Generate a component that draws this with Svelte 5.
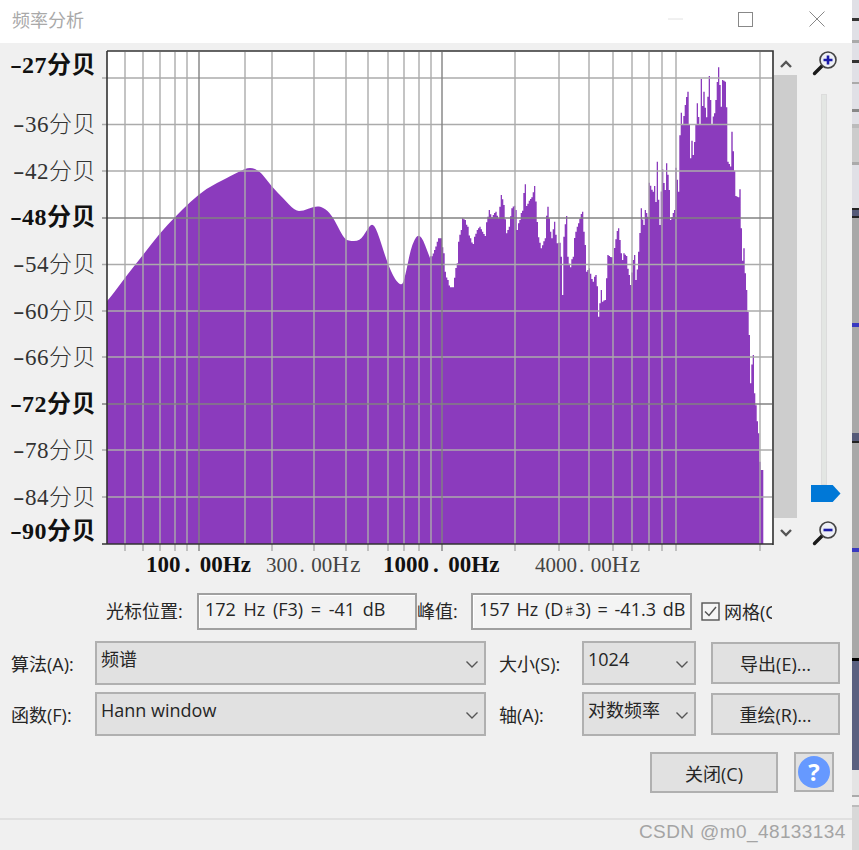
<script lang="ts">
  const gridH = [78, 124.5, 171, 264.5, 311, 357, 450, 497];
  const gridHDark = [218, 404];
  const gridV = [125, 143, 160, 175, 187, 245, 272, 314, 346, 368, 388, 404, 419, 431, 515, 559, 589, 613, 632, 649, 662, 676, 760];
  const gridVDark = [199, 442];
  const noTick = [245, 431];

  const yLabels = [
    ["27分贝", 65, true],
    ["36分贝", 124, false],
    ["42分贝", 171, false],
    ["48分贝", 217, true],
    ["54分贝", 264, false],
    ["60分贝", 311, false],
    ["66分贝", 357, false],
    ["72分贝", 404, true],
    ["78分贝", 450, false],
    ["84分贝", 497, false],
    ["90分贝", 531, true]
  ];

  const xLabels = [
    ["100", 146, true],
    ["300", 266, false],
    ["1000", 383, true],
    ["4000", 535, false]
  ];

  // smooth low end of the spectrum, page coordinates
  const low = [
    [107, 301], [110, 298], [127, 275], [143, 255], [160, 233], [175, 217], [190, 202], [207, 188],
    [227, 178], [240, 171], [250, 167], [260, 171], [272, 187], [283, 198], [295, 211], [303, 211],
    [315, 206], [323, 207], [332, 215], [343, 237], [348, 241], [360, 241], [367, 230], [372, 223],
    [377, 230], [387, 262], [395, 280], [402, 286], [405, 277], [412, 243], [420, 232], [430, 258]
  ];

  // spiky high end, measured at 3x from x=430
  const high = [
    [3, 775], [15, 750], [25, 715], [35, 715], [40, 760], [45, 815], [52, 840], [60, 862], [70, 862], [80, 790], [87, 725],
    [92, 690], [98, 655], [105, 660], [112, 680], [120, 715], [128, 732], [135, 710], [142, 690], [150, 680],
    [158, 695], [165, 708], [172, 650], [178, 630], [185, 652], [197, 635], [205, 655], [215, 585], [222, 615],
    [230, 700], [238, 680], [245, 625], [252, 617], [258, 630], [262, 690], [268, 660], [276, 632], [285, 553],
    [291, 618], [298, 602], [306, 592], [315, 558], [325, 712], [335, 745], [345, 715], [352, 620], [358, 655],
    [364, 715], [375, 665], [380, 730], [388, 728], [394, 770], [399, 885], [403, 710], [408, 648], [414, 770],
    [420, 802], [428, 770], [436, 695], [446, 670], [456, 635], [466, 735], [470, 815], [478, 805], [488, 845],
    [496, 825], [504, 870], [506, 950], [514, 870], [518, 905], [524, 900], [530, 835], [534, 765], [544, 772],
    [550, 795], [556, 718], [564, 685], [570, 720], [576, 780], [582, 760], [590, 768], [596, 825], [603, 855],
    [609, 780], [614, 765], [619, 840], [627, 755], [634, 625], [640, 675], [647, 630], [654, 650], [659, 548],
    [668, 575], [674, 558], [680, 630], [683, 485], [688, 675], [698, 508], [704, 570], [711, 490], [718, 570],
    [723, 660], [733, 630], [739, 503], [745, 575], [752, 338], [758, 375], [767, 315], [772, 275], [776, 375],
    [782, 475], [786, 422], [791, 465], [798, 375], [802, 310], [808, 372], [812, 237], [817, 318], [821, 275],
    [829, 352], [839, 228], [845, 372], [852, 340], [857, 300], [866, 202], [870, 255], [875, 320], [879, 240],
    [886, 245], [891, 322], [894, 485], [905, 505], [907, 395], [913, 512], [917, 588], [925, 592], [928, 568],
    [934, 685], [939, 782], [943, 745], [948, 870], [952, 935], [957, 1005], [962, 1150], [968, 1065], [975, 1180],
    [985, 1300], [989, 1385], [994, 1410], [1000, 1410]
  ];

  const bottom = 544;

  // value of the outline at x, straight lines between measured points
  function lerp(points: number[][], x: number) {
    for (let i = 1; i < points.length; i++) {
      const [x0, y0] = points[i - 1];
      const [x1, y1] = points[i];
      if (x <= x1) return y0 + ((y1 - y0) * (x - x0)) / (x1 - x0);
    }
    return points[points.length - 1][1];
  }

  function spectrumPath() {
    let d = `M107 ${bottom} L107 301`;
    // low end: mid-point quadratics so the hump stays round
    for (let i = 1; i < low.length - 1; i++) {
      const [x, y] = low[i];
      const [nx, ny] = low[i + 1];
      d += ` Q${x} ${y} ${(x + nx) / 2} ${(y + ny) / 2}`;
    }
    d += " L430 258";

    // high end: one narrow bar per 4 units, a measured point inside a bar wins
    const barWidth = 4;
    let prev = 775;
    for (let x = 4; x < 1000; x += barWidth) {
      const inside = high.filter((p) => p[0] >= x && p[0] < x + barWidth);
      let y = lerp(high, x + barWidth / 2);
      if (inside.length) {
        y = inside.reduce((best, p) => (Math.abs(p[1] - prev) > Math.abs(best - prev) ? p[1] : best), inside[0][1]);
      }
      prev = y;
      d += ` V${(y / 3).toFixed(1)} H${(430 + (x + barWidth) / 3).toFixed(1)}`;
    }
    return d + ` V${bottom} Z`;
  }

  const spectrum = spectrumPath();
</script>

<div class="window">
  <div class="main">
    <header class="titlebar">
      <span class="title">频率分析</span>
      <div class="winbtns">
        <svg class="min" width="15" height="2" viewBox="0 0 15 2"><path d="M0 1H15" stroke="#e2e2e2" /></svg>
        <svg class="max" width="15" height="15" viewBox="0 0 15 15"><rect x="0.5" y="0.5" width="14" height="14" fill="none" stroke="#888" /></svg>
        <svg class="close" width="16" height="16" viewBox="0 0 16 16"><path d="M.5 .5L15.5 15.5M15.5 .5L.5 15.5" stroke="#888" fill="none" /></svg>
      </div>
    </header>

    <section class="dialog">
      <div class="chart">
        <div class="y-axis">
          {#each yLabels as [text, y, bold]}
            <span class="y-label" class:bold style="top: {(y as number) - 48}px"><i>-</i>{text}</span>
          {/each}
        </div>

        <div class="plot">
          <svg width="674" height="510" viewBox="100 48 674 510">
            <rect x="107" y="51" width="665" height="493" fill="#fff" />
            <path d={spectrum} fill="#8b3bbd" />
            {#each gridH as y}
              <path d="M102 {y}H772" stroke="#ababab" stroke-width="1.4" />
            {/each}
            {#each gridV as x}
              <path d="M{x} 52V{noTick.includes(x) ? 544 : 551}" stroke="#ababab" stroke-width="1.4" />
            {/each}
            {#each gridHDark as y}
              <path d="M102 {y}H772" stroke="#828282" stroke-width="1.4" />
            {/each}
            {#each gridVDark as x}
              <path d="M{x} 52V551" stroke="#828282" stroke-width="1.4" />
            {/each}
            <path d="M102 544H773M107 51H773V545M107 51V544" fill="none" stroke="#333" stroke-width="1.6" />
          </svg>
          {#each xLabels as [text, x, bold]}
            <span class="x-label" class:bold style="left: {(x as number) - 100}px">{text}<i>.</i>00<b>Hz</b></span>
          {/each}
        </div>

        <div class="scroll">
          <svg width="14" height="10" viewBox="0 0 14 10"><path d="M2 8L7 3L12 8" fill="none" stroke="#555" stroke-width="2.4" /></svg>
          <div class="thumb"></div>
          <svg width="14" height="10" viewBox="0 0 14 10"><path d="M2 2L7 7L12 2" fill="none" stroke="#555" stroke-width="2.4" /></svg>
        </div>

        <div class="zoom">
          <svg width="26" height="26" viewBox="0 0 26 26">
            <path d="M2.5 23.5L11 15" stroke="#1a1a1a" stroke-width="3.4" stroke-linecap="round" />
            <circle cx="16" cy="10" r="8" fill="#eef0f6" stroke="#444" stroke-width="1.6" />
            <path d="M16 5.5V14.5M11.5 10H20.5" stroke="#1c1ca8" stroke-width="2.6" />
          </svg>
          <div class="slider">
            <div class="slider-thumb"></div>
          </div>
          <svg width="26" height="26" viewBox="0 0 26 26">
            <path d="M2.5 23.5L11 15" stroke="#1a1a1a" stroke-width="3.4" stroke-linecap="round" />
            <circle cx="16" cy="10" r="8" fill="#eef0f6" stroke="#444" stroke-width="1.6" />
            <path d="M11.5 10H20.5" stroke="#1c1ca8" stroke-width="2.6" />
          </svg>
        </div>
      </div>

      <div class="readouts">
        <span class="read-label">光标位置:</span>
        <div class="readout first">172 Hz (F3) = -41 dB</div>
        <span class="read-label peak">峰值:</span>
        <div class="readout second">157 Hz (D<span class="sharp">♯</span>3) = -41.3 dB</div>
        <div class="check">
          <svg width="19" height="19" viewBox="0 0 19 19">
            <rect x="1" y="1" width="17" height="17" fill="#f6f6f6" stroke="#555" stroke-width="1.4" />
            <path d="M4 9.5L8 13.5L15 5" fill="none" stroke="#555" stroke-width="1.5" />
          </svg>
          <span class="check-text">网格(G)</span>
        </div>
      </div>

      <div class="controls">
        <span class="lab">算法(A):</span>
        <div class="select"><span>频谱</span>{@render chevron()}</div>
        <span class="lab second-lab">大小(S):</span>
        <div class="select"><span>1024</span>{@render chevron()}</div>
        <button type="button">导出(E)...</button>

        <span class="lab">函数(F):</span>
        <div class="select"><span>Hann window</span>{@render chevron()}</div>
        <span class="lab second-lab">轴(A):</span>
        <div class="select"><span>对数频率</span>{@render chevron()}</div>
        <button type="button">重绘(R)...</button>
      </div>

      <div class="actions">
        <button type="button" class="close-btn">关闭(C)</button>
        <button type="button" class="help"><span>?</span></button>
      </div>

      <div class="footer"></div>
    </section>
  </div>
  <div class="strip"></div>
  <span class="watermark">CSDN @m0_48133134</span>
</div>

{#snippet chevron()}
  <svg class="chev" width="14" height="9" viewBox="0 0 14 9"><path d="M1.5 1.5L7 7L12.5 1.5" fill="none" stroke="#555" stroke-width="1.4" /></svg>
{/snippet}

<style>
  :global(body) {
    margin: 0;
    background: #fff;
  }

  .window {
    position: relative;
    display: flex;
    width: 859px;
    height: 850px;
    overflow: hidden;
    font-family: "Open Sans", "Noto Sans CJK SC", sans-serif;
    color: #262626;
  }

  .main {
    display: flex;
    flex-direction: column;
    width: 852px;
  }

  .titlebar {
    display: flex;
    align-items: center;
    justify-content: space-between;
    height: 43px;
    background: #fff;
    padding-left: 12px;
    box-sizing: border-box;
  }

  .title {
    font-family: "Noto Sans CJK SC", sans-serif;
    font-size: 18px;
    color: #a9a9a9;
    margin-top: -5px;
  }

  .winbtns {
    position: relative;
    display: flex;
    align-items: center;
    margin-top: -5px;
    padding-right: 27px;
  }

  .winbtns .max {
    margin-left: 55px;
  }

  .winbtns .close {
    margin-left: 56px;
  }

  .dialog {
    flex: 1;
    background: #f0f0f0;
    display: flex;
    flex-direction: column;
  }

  .chart {
    display: flex;
    height: 540px;
    padding-top: 5px;
    box-sizing: border-box;
  }

  .y-axis {
    position: relative;
    width: 100px;
    flex: none;
  }

  .y-label {
    position: absolute;
    right: 4px;
    transform: translateY(-50%);
    white-space: nowrap;
    font-family: "Liberation Serif", "Noto Sans CJK SC", serif;
    font-size: 23px;
    font-weight: 300;
    line-height: 1;
    letter-spacing: 0.5px;
    color: #333;
  }

  .y-label i {
    display: inline-block;
    font-style: normal;
    margin-right: 4px;
    transform: scaleX(1.5);
    transform-origin: left center;
  }

  .y-label.bold {
    font-size: 24px;
    font-weight: 700;
    color: #111;
  }

  .plot {
    position: relative;
    width: 674px;
    flex: none;
  }

  .plot svg {
    display: block;
  }

  .x-label {
    position: absolute;
    top: 505px;
    white-space: nowrap;
    font-family: "Liberation Serif", serif;
    font-size: 21px;
    line-height: 24px;
    color: #444;
  }

  .x-label i {
    font-style: normal;
    margin-left: 2px;
    letter-spacing: 6.5px;
  }

  .x-label b {
    font-weight: inherit;
    font-size: 23px;
    letter-spacing: 1.5px;
    line-height: 20px;
  }

  .x-label.bold {
    font-size: 23px;
    font-weight: 700;
    color: #111;
  }

  .x-label.bold i {
    margin-left: 4px;
    letter-spacing: 9.5px;
  }

  .x-label.bold b {
    font-size: 23px;
    letter-spacing: 0;
  }

  .scroll {
    display: flex;
    flex-direction: column;
    align-items: center;
    width: 23px;
    flex: none;
    padding-top: 11px;
  }

  .thumb {
    width: 23px;
    height: 443px;
    margin: 6px 0 10px;
    background: #cdcdcd;
  }

  .zoom {
    display: flex;
    flex-direction: column;
    align-items: center;
    width: 57px;
    flex: none;
    padding: 2px 4px 0 0;
    box-sizing: border-box;
  }

  .zoom svg {
    flex: none;
    margin-left: 3px;
  }

  .slider {
    position: relative;
    width: 6px;
    height: 391px;
    margin: 18px 0 35px;
    background: #e3e6e3;
    border: 1px solid #dcdcdc;
    box-sizing: border-box;
  }

  .slider-thumb {
    position: absolute;
    left: -11px;
    bottom: -18px;
    width: 30px;
    height: 17px;
    background: #0078d7;
    clip-path: polygon(0 0, 74% 0, 100% 50%, 74% 100%, 0 100%);
  }

  .readouts {
    display: flex;
    align-items: center;
    height: 38px;
    margin-top: 9px;
    padding-left: 106px;
    font-size: 18px;
  }

  .read-label {
    width: 91px;
    flex: none;
    white-space: nowrap;
    margin-top: -3px;
  }

  .read-label.peak {
    width: 54px;
  }

  .readout {
    height: 37px;
    line-height: 29px;
    box-sizing: border-box;
    flex: none;
    border: 2px solid #a0a0a0;
    white-space: nowrap;
    word-spacing: 2px;
  }

  .readout.first {
    width: 220px;
    padding-left: 6px;
    background: #f2f2f2;
    box-shadow: inset 1px 1px 0 #fff;
    word-spacing: 3px;
  }

  .readout.second {
    width: 221px;
    padding-left: 6px;
    background: #f4f4f4;
    box-shadow: inset 1px 1px 0 #fff;
    overflow: hidden;
  }

  .sharp {
    font-size: 12px;
  }

  .check {
    display: flex;
    align-items: center;
    gap: 4px;
    margin-left: 9px;
    width: 71px;
    overflow: hidden;
    flex: none;
  }

  .check svg {
    flex: none;
  }

  .check-text {
    white-space: nowrap;
  }

  .controls {
    display: grid;
    grid-template-columns: 84px 391px 96px 114px 144px;
    grid-auto-rows: 44px;
    row-gap: 7px;
    align-items: center;
    margin-top: 11px;
    padding-left: 11px;
    font-size: 18px;
  }

  .lab {
    white-space: nowrap;
  }

  .second-lab {
    padding-left: 13px;
  }

  .select {
    position: relative;
    height: 44px;
    box-sizing: border-box;
    padding: 3px 0 0 4px;
    background: #e1e1e1;
    border: 2px solid #b0b0b0;
    line-height: 26px;
    white-space: nowrap;
  }

  .chev {
    position: absolute;
    right: 5px;
    top: 17px;
  }

  button {
    font: inherit;
    color: inherit;
    background: #e1e1e1;
    border: 2px solid #b0b0b0;
    padding: 0;
  }

  .controls button {
    height: 42px;
    margin-left: 15px;
    width: 129px;
  }

  .actions {
    display: flex;
    justify-content: flex-end;
    align-items: flex-start;
    gap: 16px;
    margin-top: 16px;
    padding-right: 18px;
    font-size: 18px;
  }

  .close-btn {
    width: 128px;
    height: 41px;
  }

  .help {
    display: flex;
    align-items: center;
    justify-content: center;
    width: 40px;
    height: 40px;
  }

  .help span {
    display: block;
    width: 32px;
    height: 32px;
    border-radius: 50%;
    background: #6699ff;
    color: #fff;
    font: 700 24px/32px "Open Sans", sans-serif;
    text-align: center;
  }

  .footer {
    margin-top: 25px;
    height: 2px;
    background: #e0e0e0;
  }

  .strip {
    width: 7px;
    flex: none;
    background: linear-gradient(
      to bottom,
      #e0e0e6 0 18px,
      #333 18px 21px,
      #e0e0e6 21px 40px,
      #aaa 40px 43px,
      #e0e0e6 43px 60px,
      #333 60px 63px,
      #e0e0e6 63px 82px,
      #aaa 82px 84px,
      #e0e0e6 84px 109px,
      #888 109px 112px,
      #e0e0e6 112px 124px,
      #bbb 124px 128px,
      #ccc 128px 162px,
      #aaa 162px 165px,
      #e0e0e6 165px 208px,
      #222 208px 210px,
      #555a78 210px 216px,
      #222 216px 218px,
      #a8a8a8 218px 323px,
      #3838c0 323px 327px,
      #a8a8a8 327px 433px,
      #555a78 433px 441px,
      #222 441px 443px,
      #a8a8a8 443px 548px,
      #3838c0 548px 552px,
      #a8a8a8 552px 658px,
      #000 658px 661px,
      #5a6080 661px 770px,
      #e4e4e4 770px 795px,
      #aaa 795px 797px,
      #efefef 797px 805px,
      #bbb 805px 807px,
      #d8d8d8 807px 850px
    );
  }

  .watermark {
    position: absolute;
    left: 639px;
    top: 820px;
    font-family: "Liberation Sans", sans-serif;
    font-size: 19px;
    line-height: 24px;
    letter-spacing: 0.4px;
    color: #a4a4a4;
    white-space: nowrap;
  }
</style>
